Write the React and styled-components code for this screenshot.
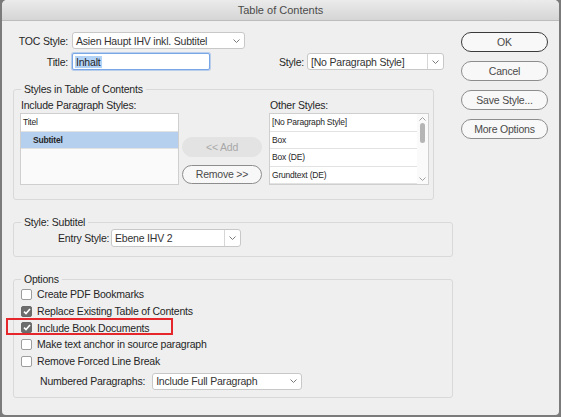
import React from "react";
import styled, { createGlobalStyle, css } from "styled-components";

const GlobalStyle = createGlobalStyle`
  html, body {
    margin: 0;
    padding: 0;
    background: #7b7b7b;
  }
  body {
    font-family: "Liberation Sans", Arial, sans-serif;
    font-size: 10.5px;
    letter-spacing: -0.2px;
    color: #262626;
  }
  * { box-sizing: border-box; }
`;

const Dialog = styled.div`
  width: 557px;
  height: 415px;
  margin-left: 2px;
  background: #efefef;
  border-radius: 5px 5px 4px 4px;
  overflow: hidden;
  display: flex;
  flex-direction: column;
`;

const TitleBar = styled.div`
  height: 21px;
  flex-shrink: 0;
  display: flex;
  align-items: center;
  justify-content: center;
  background: linear-gradient(#ebebeb, #d5d5d5);
  border-bottom: 1px solid #bcbcbc;
  color: #4b4b4b;
  font-size: 11px;
  letter-spacing: 0;
`;

const Content = styled.div`
  display: flex;
  padding: 11px 11px 0 11px;
`;

const Main = styled.div`
  width: 440px;
  display: flex;
  flex-direction: column;
`;

const Side = styled.div`
  margin-left: auto;
  width: 87px;
  display: flex;
  flex-direction: column;
  gap: 9.5px;
`;

const TopRow = styled.div`
  display: flex;
  align-items: center;
  height: 17px;
  margin-top: ${(p) => p.top || 0}px;
`;

const FieldLabel = styled.span`
  width: ${(p) => (p.w ? `${p.w}px` : "auto")};
  flex-shrink: 0;
  text-align: right;
  margin-left: ${(p) => (p.push ? "auto" : "0")};
  margin-right: ${(p) => p.gap || 4}px;
  white-space: nowrap;
`;

const SelectBox = styled.div`
  display: flex;
  align-items: center;
  width: ${(p) => p.w}px;
  height: ${(p) => p.h || 17}px;
  flex-shrink: 0;
  margin-right: ${(p) => p.mr || 0}px;
  background: #fff;
  border: 1px solid #c8c8c8;
  border-radius: 3px;
  color: #333;
`;

const SelectText = styled.span`
  flex: 1;
  padding-left: 3px;
  white-space: nowrap;
  overflow: hidden;
`;

const SelectArrow = styled.span`
  width: 16px;
  align-self: stretch;
  display: flex;
  align-items: center;
  justify-content: center;
  ${(p) =>
    p.split &&
    css`
      border-left: 1px solid #d6d6d6;
    `}
`;

const TextInput = styled.div`
  width: 138px;
  height: 17px;
  display: flex;
  align-items: center;
  padding-left: 2px;
  background: #fff;
  border: 1px solid #78a6e6;
  box-shadow: 0 0 0 1px rgba(120, 166, 230, 0.45);
  border-radius: 2px;
`;

const Selected = styled.span`
  background: #b3d3f6;
  padding: 0 1px;
`;

const Group = styled.fieldset`
  margin: ${(p) => p.top}px 0 0;
  padding: 0;
  width: ${(p) => p.w}px;
  min-width: 0;
  border: 1px solid #d9d9d9;
  border-radius: 3px;
`;

const Legend = styled.legend`
  margin-left: 7px;
  padding: 0 3px;
  line-height: 14px;
  font-size: 10.5px;
`;

const ListsRow = styled.div`
  display: flex;
  padding: 2px 0 14px 6px;
`;

const ListColumn = styled.div`
  display: flex;
  flex-direction: column;
  margin-left: ${(p) => p.ml || 0}px;
`;

const ColumnLabel = styled.div`
  line-height: 14px;
  margin-bottom: 1px;
  padding-left: 1px;
`;

const ListBox = styled.div`
  width: ${(p) => p.w}px;
  height: 72px;
  background: #fafafa;
  border: 1px solid #cfcfcf;
  display: flex;
`;

const Rows = styled.div`
  flex: 1;
  display: flex;
  flex-direction: column;
`;

const Row = styled.div`
  height: 17.6px;
  flex-shrink: 0;
  display: flex;
  align-items: center;
  padding-left: ${(p) => (p.indent ? 12 : 2)}px;
  border-bottom: 1px solid #e2e2e2;
  font-size: 8.5px;
  font-weight: ${(p) => (p.bold ? 700 : 400)};
  background: ${(p) => (p.active ? "#b5d0ee" : "#fff")};
  white-space: nowrap;
`;

const ScrollBar = styled.div`
  width: 11px;
  background: #fafafa;
  display: flex;
  flex-direction: column;
  align-items: center;
  padding: 3px 0;
`;

const Thumb = styled.div`
  width: 5px;
  height: 20px;
  margin-top: 2px;
  border-radius: 3px;
  background: #b5b5b5;
`;

const MidButtons = styled.div`
  display: flex;
  flex-direction: column;
  justify-content: flex-end;
  gap: 8px;
  margin-left: 3px;
  padding-bottom: 1px;
`;

const Pill = styled.div`
  width: ${(p) => p.w || 87}px;
  height: 19.5px;
  display: flex;
  align-items: center;
  justify-content: center;
  border-radius: 10px;
  background: #f8f8f8;
  border: 1px solid #8d8d8d;
  color: #4a4a4a;
  font-size: 10.5px;
  ${(p) =>
    p.primary &&
    css`
      border: 1.5px solid #3b3b3b;
    `}
  ${(p) =>
    p.disabled &&
    css`
      background: #e3e3e3;
      border-color: #e3e3e3;
      color: #a8a8a8;
    `}
`;

const EntryRow = styled.div`
  display: flex;
  align-items: center;
  padding: 0 0 9px 44px;
`;

const Options = styled.div`
  display: flex;
  flex-direction: column;
  padding: 0 0 7px 7px;
`;

const CheckRow = styled.div`
  position: relative;
  height: 16.7px;
  display: flex;
  align-items: center;
`;

const Box = styled.span`
  width: 11px;
  height: 11px;
  margin-right: 5px;
  border-radius: 2px;
  display: flex;
  align-items: center;
  justify-content: center;
  border: 1px solid ${(p) => (p.checked ? "#6a6a6a" : "#9d9d9d")};
  background: ${(p) => (p.checked ? "#6d6d6d" : "#fff")};
`;

const Highlight = styled.div`
  position: absolute;
  left: -15px;
  top: -1.5px;
  width: 167px;
  height: 17px;
  border: 2px solid #e5262b;
  pointer-events: none;
`;

const NumberedRow = styled.div`
  display: flex;
  align-items: center;
  margin-top: 3.5px;
  padding-left: 19px;
`;

const Chevron = ({ up, down }) => (
  <svg width="7" height="4" viewBox="0 0 7 4">
    <path
      d={up ? "M0.5 3.5 L3.5 0.5 L6.5 3.5" : "M0.5 0.5 L3.5 3.5 L6.5 0.5"}
      fill="none"
      stroke={up || down ? "#a0a0a0" : "#7a7a7a"}
      strokeWidth="1"
    />
  </svg>
);

const Check = () => (
  <svg width="8" height="7" viewBox="0 0 8 7">
    <path d="M1 3.6 L3 5.6 L7 1" fill="none" stroke="#fff" strokeWidth="1.6" />
  </svg>
);

const Select = ({ w, h, mr, split, children }) => (
  <SelectBox w={w} h={h} mr={mr}>
    <SelectText>{children}</SelectText>
    <SelectArrow split={split}>
      <Chevron />
    </SelectArrow>
  </SelectBox>
);

const Option = ({ checked, children, marked }) => (
  <CheckRow>
    <Box checked={checked}>{checked && <Check />}</Box>
    {children}
    {marked && <Highlight />}
  </CheckRow>
);

export default function App() {
  return (
    <>
      <GlobalStyle />
      <Dialog>
        <TitleBar>Table of Contents</TitleBar>
        <Content>
          <Main>
            <TopRow>
              <FieldLabel w={55}>TOC Style:</FieldLabel>
              <Select w={173}>Asien Haupt IHV inkl. Subtitel</Select>
            </TopRow>
            <TopRow top={4}>
              <FieldLabel w={55}>Title:</FieldLabel>
              <TextInput>
                <Selected>Inhalt</Selected>
              </TextInput>
              <FieldLabel push gap={3}>
                Style:
              </FieldLabel>
              <Select w={137} mr={9} split>
                [No Paragraph Style]
              </Select>
            </TopRow>

            <Group top={12} w={421}>
              <Legend>Styles in Table of Contents</Legend>
              <ListsRow>
                <ListColumn>
                  <ColumnLabel>Include Paragraph Styles:</ColumnLabel>
                  <ListBox w={159}>
                    <Rows>
                      <Row>Titel</Row>
                      <Row indent bold active>
                        Subtitel
                      </Row>
                    </Rows>
                  </ListBox>
                </ListColumn>
                <MidButtons>
                  <Pill w={80} disabled>
                    &lt;&lt; Add
                  </Pill>
                  <Pill w={80}>Remove &gt;&gt;</Pill>
                </MidButtons>
                <ListColumn ml={7}>
                  <ColumnLabel>Other Styles:</ColumnLabel>
                  <ListBox w={160}>
                    <Rows>
                      <Row>[No Paragraph Style]</Row>
                      <Row>Box</Row>
                      <Row>Box (DE)</Row>
                      <Row>Grundtext (DE)</Row>
                    </Rows>
                    <ScrollBar>
                      <Chevron up />
                      <Thumb />
                      <span style={{ flex: 1 }} />
                      <Chevron down />
                    </ScrollBar>
                  </ListBox>
                </ListColumn>
              </ListsRow>
            </Group>

            <Group top={15} w={440}>
              <Legend>Style: Subtitel</Legend>
              <EntryRow>
                <FieldLabel w={48} gap={5}>
                  Entry Style:
                </FieldLabel>
                <Select w={130} h={18} split>
                  Ebene IHV 2
                </Select>
              </EntryRow>
            </Group>

            <Group top={15} w={440}>
              <Legend>Options</Legend>
              <Options>
                <Option>Create PDF Bookmarks</Option>
                <Option checked>Replace Existing Table of Contents</Option>
                <Option checked marked>
                  Include Book Documents
                </Option>
                <Option>Make text anchor in source paragraph</Option>
                <Option>Remove Forced Line Break</Option>
                <NumberedRow>
                  <FieldLabel gap={7}>Numbered Paragraphs:</FieldLabel>
                  <Select w={150}>Include Full Paragraph</Select>
                </NumberedRow>
              </Options>
            </Group>
          </Main>
          <Side>
            <Pill primary>OK</Pill>
            <Pill>Cancel</Pill>
            <Pill>Save Style...</Pill>
            <Pill>More Options</Pill>
          </Side>
        </Content>
      </Dialog>
    </>
  );
}
